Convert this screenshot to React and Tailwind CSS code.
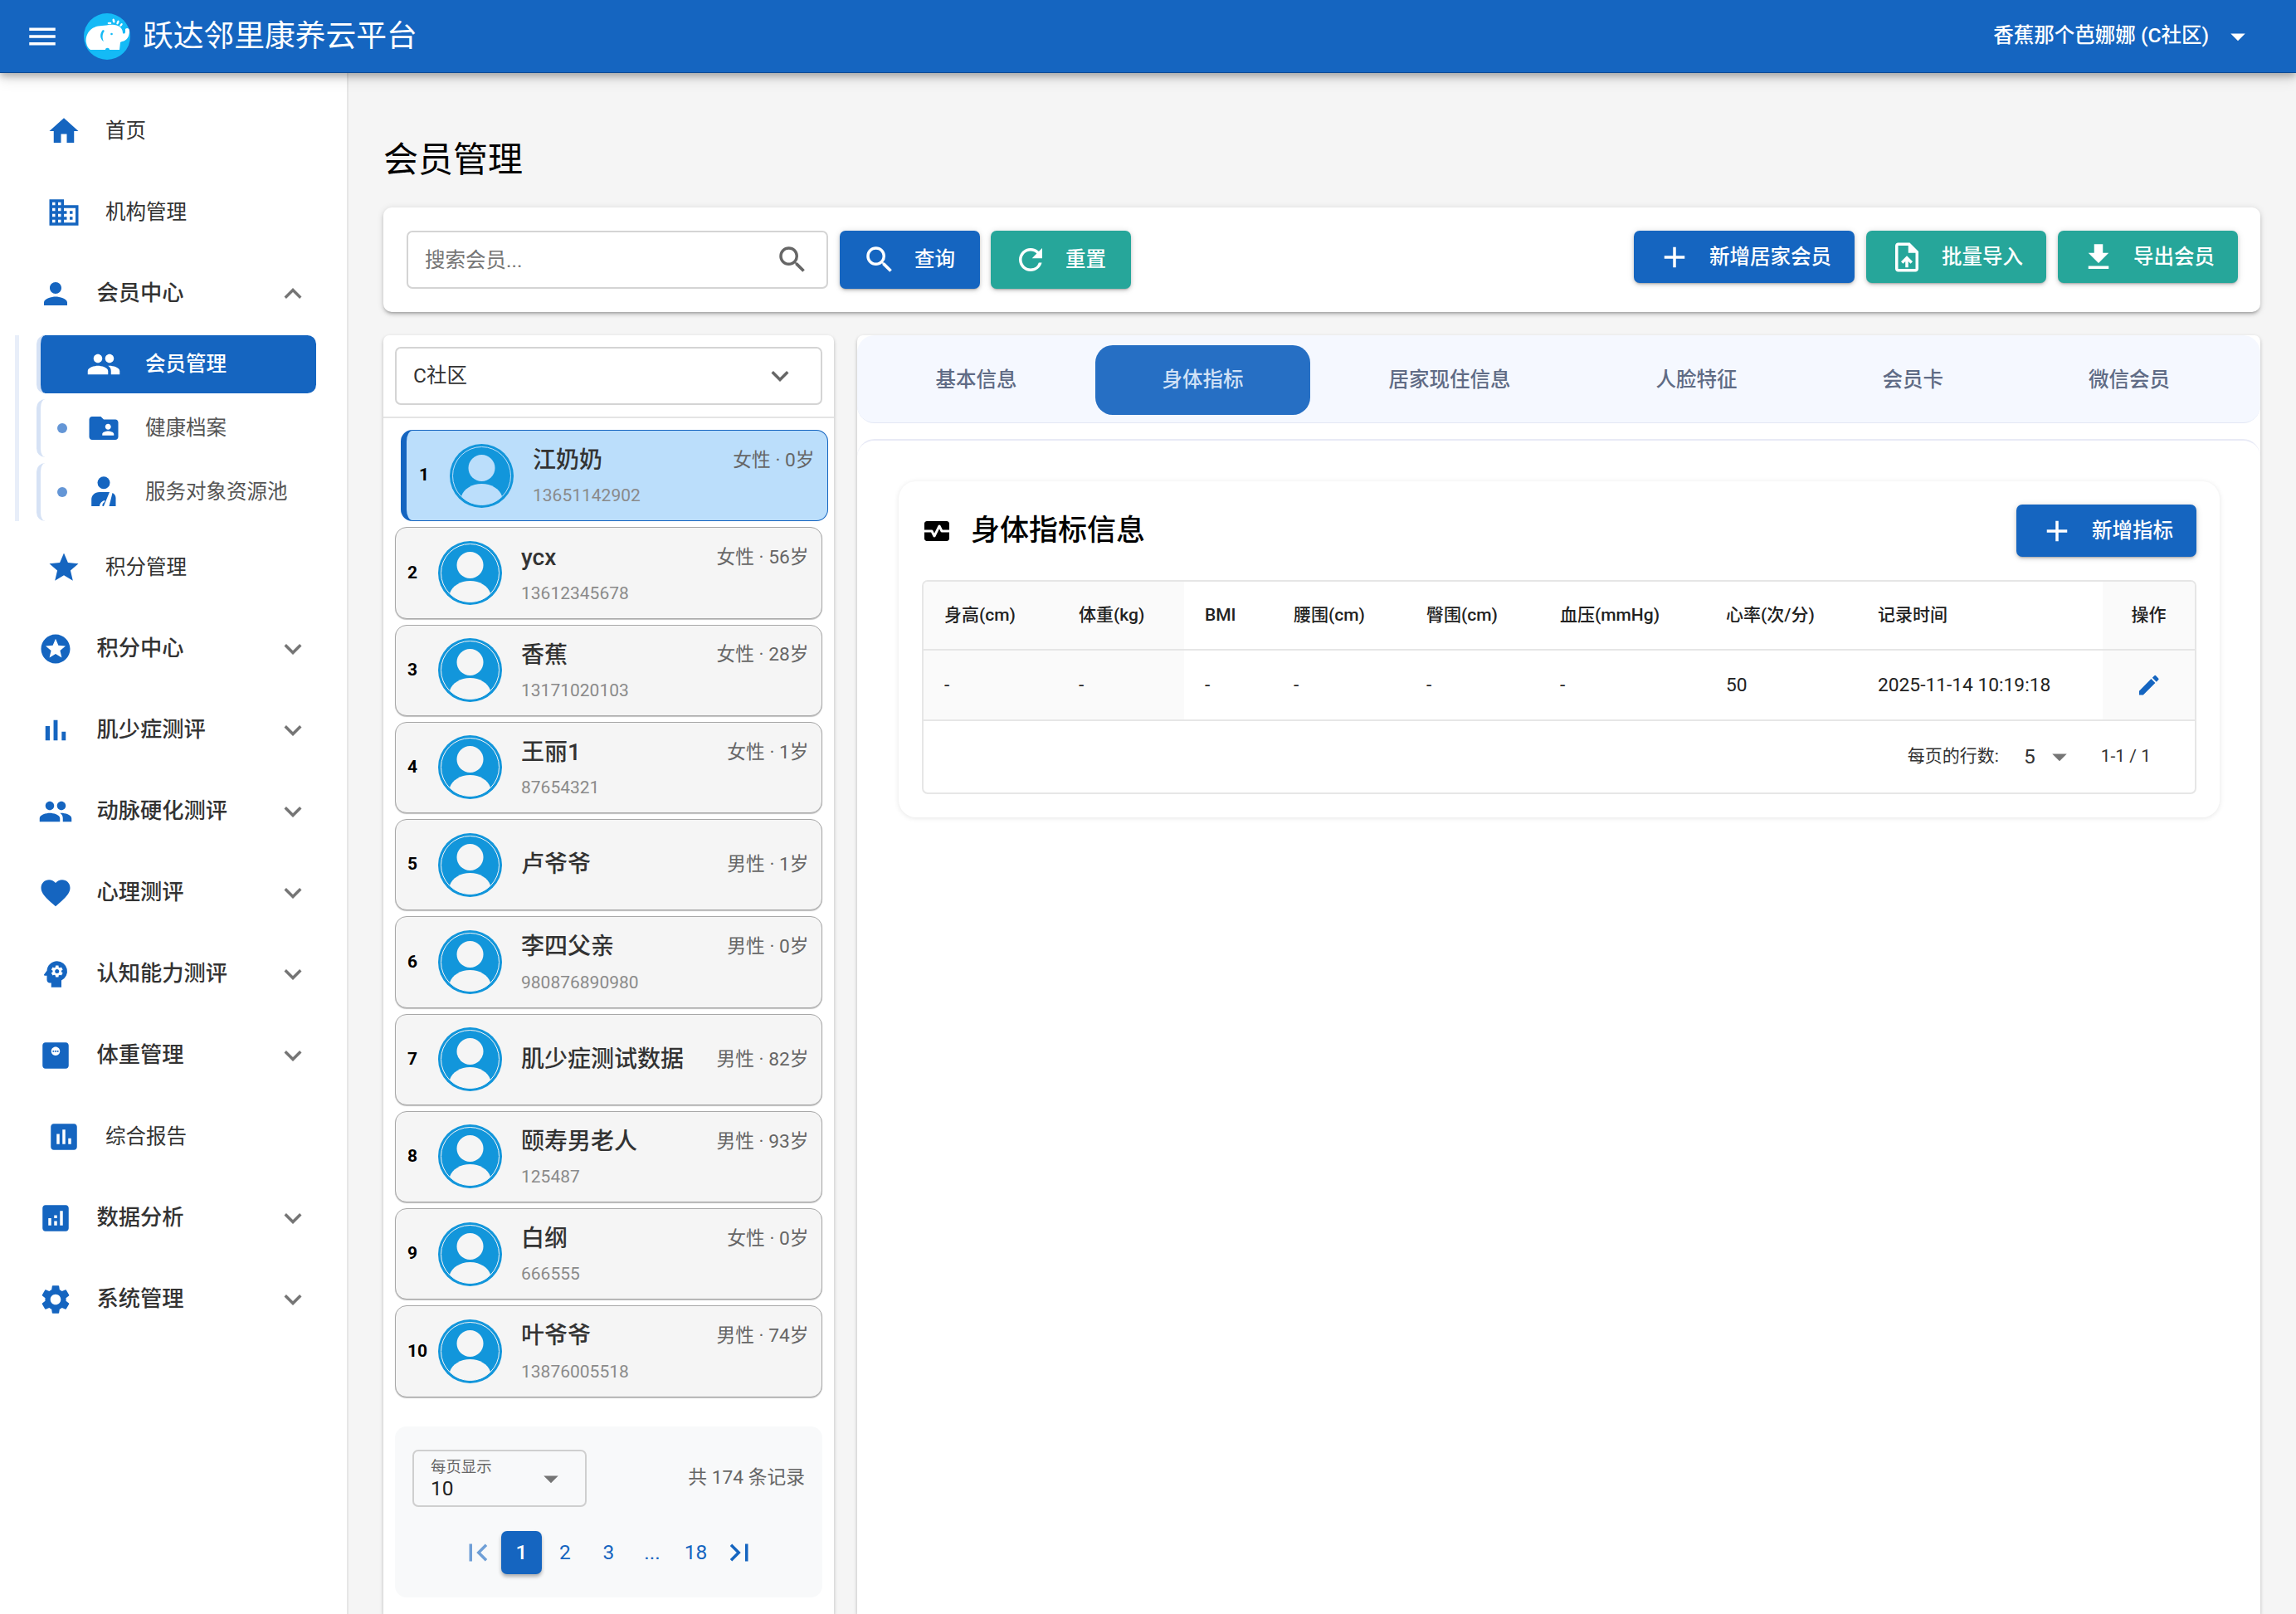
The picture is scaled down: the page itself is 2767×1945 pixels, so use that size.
import React from 'react'
import {
  MdMenu, MdHome, MdBusiness, MdPerson, MdPeople, MdFolderShared, MdStar, MdStars,
  MdFavorite, MdPsychology, MdMonitorWeight, MdAssessment, MdAnalytics, MdSettings,
  MdExpandMore, MdExpandLess, MdSearch, MdRefresh, MdAdd, MdUploadFile, MdFileDownload, MdEdit,
  MdMonitorHeart, MdFirstPage, MdLastPage, MdArrowDropDown,
} from 'react-icons/md'

const members = [
  { name: '江奶奶', info: '女性 · 0岁', phone: '13651142902' },
  { name: 'ycx', info: '女性 · 56岁', phone: '13612345678' },
  { name: '香蕉', info: '女性 · 28岁', phone: '13171020103' },
  { name: '王丽1', info: '女性 · 1岁', phone: '87654321' },
  { name: '卢爷爷', info: '男性 · 1岁', phone: '' },
  { name: '李四父亲', info: '男性 · 0岁', phone: '980876890980' },
  { name: '肌少症测试数据', info: '男性 · 82岁', phone: '' },
  { name: '颐寿男老人', info: '男性 · 93岁', phone: '125487' },
  { name: '白纲', info: '女性 · 0岁', phone: '666555' },
  { name: '叶爷爷', info: '男性 · 74岁', phone: '13876005518' },
]

const columns = [
  { label: '身高(cm)', value: '-', width: 'w-[162px]', tint: true },
  { label: '体重(kg)', value: '-', width: 'w-[152px]', tint: true },
  { label: 'BMI', value: '-', width: 'w-[107px]' },
  { label: '腰围(cm)', value: '-', width: 'w-[160px]' },
  { label: '臀围(cm)', value: '-', width: 'w-[161px]' },
  { label: '血压(mmHg)', value: '-', width: 'w-[200px]' },
  { label: '心率(次/分)', value: '50', width: 'w-[183px]' },
  { label: '记录时间', value: '2025-11-14 10:19:18', width: 'w-[296px]' },
]

const tabs = ['基本信息', '身体指标', '居家现住信息', '人脸特征', '会员卡', '微信会员']

function Logo() {
  return (
    <svg viewBox="0 0 56 56" className="w-[56px] h-[56px] shrink-0">
      <circle cx="28" cy="28" r="28" fill="#14baf6" />
      <path
        d="M3 36C1 26 8 15 22 15C27 15 30 13 37 14C44 15 47 19 47 24C48 25 50 25 50 22L50 19C52 17 55 18 55 21C55 28 52 33 46 34L44 35L43 44L31 44C31 41 26 41 26 44L8 44C5 42 4 40 3 36Z"
        fill="#fff"
      />
      <path d="M23 20C19 24 19 31 24 34C22 30 22 25 25 21Z" fill="#14baf6" />
      <circle cx="33.5" cy="25" r="1.3" fill="#14baf6" />
      <g fill="#fff">
        <ellipse cx="36" cy="9" rx="1.4" ry="2.6" transform="rotate(-15 36 9)" />
        <ellipse cx="41" cy="11" rx="1.3" ry="2.6" transform="rotate(25 41 11)" />
        <ellipse cx="31" cy="12" rx="2.4" ry="1.2" />
        <ellipse cx="45" cy="14" rx="1.2" ry="2.2" transform="rotate(40 45 14)" />
      </g>
    </svg>
  )
}

function Avatar({ bg }) {
  return (
    <svg viewBox="0 0 77 77" className="w-[77px] h-[77px] shrink-0">
      <circle cx="38.5" cy="38.5" r="38.5" fill="#1296db" />
      <circle cx="38.5" cy="38.5" r="35" fill="none" stroke={bg} strokeWidth="1" />
      <circle cx="38.5" cy="29" r="16" fill={bg} />
      <path d="M14 63C17 54 27 48 38.5 48C50 48 60 54 63 63C57 70 48 73.5 38.5 73.5C29 73.5 20 70 14 63Z" fill={bg} />
    </svg>
  )
}

// bars are narrower than the current MdBarChart
function BarsIcon({ className }) {
  return (
    <svg viewBox="0 0 24 24" fill="currentColor" className={className}>
      <path d="M5 9.2h3V19H5zM10.6 5h2.8v14h-2.8zm5.6 8H19v6h-2.8z" />
    </svg>
  )
}

function CarerIcon({ className }) {
  return (
    <svg viewBox="0 0 42 42" fill="currentColor" className={className}>
      <circle cx="21" cy="9.7" r="7.5" />
      <path d="M6.2 38V30C6.2 25 10 21 16 21H28L21 38H19.5C19 36 20 34 22 33L22.5 31C19 31.5 16.5 34 16 38Z" />
      <path d="M31.5 22C34 23 35.5 25.5 35.5 28V38H27.5Z" />
    </svg>
  )
}

function NavItem({ icon: Icon, label, indent, open, more }) {
  return (
    <div className={`h-[98px] flex items-center ${indent ? 'pl-[46px]' : 'pl-[56px]'} pr-[44px]`}>
      <Icon className="w-[42px] h-[42px] text-[#1565c0] shrink-0" />
      <span className={`flex-1 text-[#333] ${more ? 'ml-[28.5px] text-[26.25px] font-medium' : 'ml-[29px] text-[24.5px]'}`}>{label}</span>
      {more && (open
        ? <MdExpandLess className="w-[42px] h-[42px] text-[#757575]" />
        : <MdExpandMore className="w-[42px] h-[42px] text-[#757575]" />)}
    </div>
  )
}

function SubItem({ icon: Icon, label, active }) {
  return (
    <div className={`h-[70px] w-[337px] rounded-[10.5px] border-l-[5px] border-[#d6e2f5] pl-[20px] flex items-center ${active ? 'bg-[#1565c0]' : ''}`}>
      <span className={`w-[12px] h-[12px] rounded-full shrink-0 ${active ? '' : 'bg-[#6496d6]'}`} />
      <Icon className={`ml-[23px] w-[42px] h-[42px] shrink-0 ${active ? 'text-white' : 'text-[#1565c0]'}`} />
      <span className={`ml-[29px] text-[24.5px] ${active ? 'text-white font-medium' : 'text-[#555]'}`}>{label}</span>
    </div>
  )
}

function Sidebar() {
  return (
    <aside className="w-[420px] shrink-0 bg-white border-r-2 border-[#e6e6e6] pt-[21px]">
      <NavItem icon={MdHome} label="首页" />
      <NavItem icon={MdBusiness} label="机构管理" />
      <NavItem icon={MdPerson} label="会员中心" indent more open />
      <div className="ml-[18px] mt-[1px] mb-[7px] pl-[21px] border-l-[5px] border-[#e8eef9] flex flex-col gap-[7px]">
        <SubItem icon={MdPeople} label="会员管理" active />
        <SubItem icon={MdFolderShared} label="健康档案" />
        <SubItem icon={CarerIcon} label="服务对象资源池" />
      </div>
      <NavItem icon={MdStar} label="积分管理" />
      <NavItem icon={MdStars} label="积分中心" indent more />
      <NavItem icon={BarsIcon} label="肌少症测评" indent more />
      <NavItem icon={MdPeople} label="动脉硬化测评" indent more />
      <NavItem icon={MdFavorite} label="心理测评" indent more />
      <NavItem icon={MdPsychology} label="认知能力测评" indent more />
      <NavItem icon={MdMonitorWeight} label="体重管理" indent more />
      <NavItem icon={MdAssessment} label="综合报告" />
      <NavItem icon={MdAnalytics} label="数据分析" indent more />
      <NavItem icon={MdSettings} label="系统管理" indent more />
    </aside>
  )
}

function ActionButton({ icon: Icon, label, teal, tall }) {
  return (
    <button className={`${tall ? 'h-[70px] w-[169px] pl-[27px]' : 'h-[63px] pl-[28px] pt-[1px]'} pr-[28px] flex items-center gap-[21px] rounded-[7px] text-white text-[24.5px] font-medium shadow-[0_3px_2px_-2px_rgba(0,0,0,0.2),0_2px_4px_0_rgba(0,0,0,0.14),0_1px_8px_0_rgba(0,0,0,0.12)] ${teal ? 'bg-[#26a69a]' : 'bg-[#1565c0]'}`}>
      <Icon className="w-[42px] h-[42px] shrink-0" />
      {label}
    </button>
  )
}

function Toolbar() {
  return (
    <div className="h-[126px] bg-white rounded-[10px] pl-[28px] pr-[27px] py-[28px] flex items-start shadow-[0_3px_3px_-2px_rgba(0,0,0,0.2),0_3px_4px_0_rgba(0,0,0,0.14),0_1px_8px_0_rgba(0,0,0,0.12)]">
      <div className="w-[508px] h-[70px] border-2 border-[#d4d4d4] rounded-[7px] pl-[20px] pr-[20px] flex items-center">
        <input
          placeholder="搜索会员..."
          className="flex-1 min-w-0 pt-[2px] outline-none text-[24.5px] placeholder:text-[#757575]"
        />
        <MdSearch className="w-[42px] h-[42px] text-[#666]" />
      </div>
      <div className="ml-[14px] flex gap-[13px]">
        <ActionButton icon={MdSearch} label="查询" tall />
        <ActionButton icon={MdRefresh} label="重置" teal tall />
      </div>
      <div className="ml-auto flex gap-[14px]">
        <ActionButton icon={MdAdd} label="新增居家会员" />
        <ActionButton icon={MdUploadFile} label="批量导入" teal />
        <ActionButton icon={MdFileDownload} label="导出会员" teal />
      </div>
    </div>
  )
}

function MemberRow({ index, member, active }) {
  return (
    <div className={`h-[110.25px] w-[514.5px] shrink-0 rounded-[14px] flex items-center pr-[15px] ${active ? 'ml-[7px] border border-l-[7px] border-[#1565c0] bg-[#bbdefb] pl-[15px]' : 'border border-[#a8a8a8] bg-[#f5f5f5] pl-[14px] shadow-[0_1px_1px_rgba(0,0,0,0.25)]'}`}>
      <span className="w-[37px] shrink-0 text-[21px] font-bold text-black">{index}</span>
      <Avatar bg={active ? '#bbdefb' : '#f5f5f5'} />
      {member.phone ? (
        <div className="ml-[23px] flex-1 self-stretch pt-[16px]">
          <div className="h-[40px] flex items-center justify-between">
            <span className="text-[28px] font-medium text-[#333]">{member.name}</span>
            <span className="text-[22.75px] text-[#666]">{member.info}</span>
          </div>
          <div className="mt-[8px] h-[30px] flex items-center text-[21px] text-[#8a8a8a]">{member.phone}</div>
        </div>
      ) : (
        <div className="ml-[23px] flex-1 flex items-center justify-between">
          <span className="text-[28px] font-medium text-[#333]">{member.name}</span>
          <span className="text-[22.75px] text-[#666]">{member.info}</span>
        </div>
      )}
    </div>
  )
}

function PageButton({ children, active }) {
  return (
    <button className={`w-[49px] h-[52px] mx-[1.75px] rounded-[7px] flex items-center justify-center text-[24.5px] ${active ? 'bg-[#1565c0] text-white font-medium shadow-[0_3px_4px_rgba(0,0,0,0.3)]' : 'text-[#1565c0]'}`}>
      {children}
    </button>
  )
}

function MemberList() {
  return (
    <section className="w-[543px] shrink-0 bg-white rounded-t-[7px] shadow-[0_2px_4px_rgba(0,0,0,0.25)]">
      <div className="p-[14px] border-b-2 border-[#e4e4e4]">
        <div className="h-[70px] border-2 border-[#d4d4d4] rounded-[7px] pl-[20px] pr-[28px] flex items-center justify-between">
          <span className="text-[24.5px] text-[#333]">C社区</span>
          <MdExpandMore className="w-[42px] h-[42px] text-[#666]" />
        </div>
      </div>
      <div className="pt-[14px] px-[14px]">
        <div className="flex flex-col gap-[7px]">
          {members.map((m, i) => (
            <MemberRow key={m.name} index={i + 1} member={m} active={i === 0} />
          ))}
        </div>
        <div className="mt-[35.5px] h-[206px] bg-[#f8f9fa] rounded-[14px] px-[21px] pt-[28px]">
          <div className="flex items-center justify-between">
            <div className="w-[210px] h-[69px] border-2 border-[#cfcfcf] rounded-[7px] pl-[20px] pr-[20px] flex items-center justify-between">
              <div className="flex flex-col">
                <span className="text-[18.4px] leading-[24px] text-[#666]">每页显示</span>
                <span className="text-[24.5px] leading-[28px] text-[#222]">10</span>
              </div>
              <MdArrowDropDown className="w-[42px] h-[42px] text-[#757575]" />
            </div>
            <span className="text-[22.75px] text-[#666]">共 174 条记录</span>
          </div>
          <div className="mt-[29px] flex justify-center">
            <PageButton><MdFirstPage className="w-[42px] h-[42px] opacity-60" /></PageButton>
            <PageButton active>1</PageButton>
            <PageButton>2</PageButton>
            <PageButton>3</PageButton>
            <PageButton>...</PageButton>
            <PageButton>18</PageButton>
            <PageButton><MdLastPage className="w-[42px] h-[42px]" /></PageButton>
          </div>
        </div>
      </div>
    </section>
  )
}

function MetricsTable() {
  return (
    <div className="border-2 border-[#e6e6e6] rounded-[7px] overflow-hidden">
      <table className="w-full table-fixed border-collapse text-left">
        <thead>
          <tr className="h-[82px] border-b-2 border-[#e6e6e6]">
            {columns.map((c) => (
              <th key={c.label} className={`${c.width} pl-[25px] text-[21px] font-medium text-[#222] ${c.tint ? 'bg-[#fafafa]' : ''}`}>{c.label}</th>
            ))}
            <th className="text-center text-[21px] font-medium text-[#222] bg-[#fafafa]">操作</th>
          </tr>
        </thead>
        <tbody>
          <tr className="h-[85px] border-b-2 border-[#e6e6e6]">
            {columns.map((c) => (
              <td key={c.label} className={`pl-[25px] pt-[1px] text-[22.75px] text-[#222] ${c.tint ? 'bg-[#fafafa]' : ''}`}>{c.value}</td>
            ))}
            <td className="bg-[#fafafa]">
              <MdEdit className="mx-auto w-[31.5px] h-[31.5px] text-[#1565c0]" />
            </td>
          </tr>
        </tbody>
      </table>
      <div className="h-[86px] pr-[53px] flex items-center justify-end text-[21px] text-[#333]">
        <span>每页的行数:</span>
        <span className="ml-[30px] text-[24.5px]">5</span>
        <MdArrowDropDown className="ml-[8px] w-[42px] h-[42px] text-[#757575]" />
        <span className="ml-[29px]">1-1 / 1</span>
      </div>
    </div>
  )
}

function DetailPanel() {
  return (
    <section className="flex-1 min-w-0 bg-white rounded-t-[7px] shadow-[0_2px_4px_rgba(0,0,0,0.25)]">
      <div className="h-[106px] bg-[#f5f8ff] border-b border-[#e3e8f5] rounded-[21px] pl-[14px] pt-[11.5px] flex gap-[14px]">
        {tabs.map((t) => (
          <div
            key={t}
            className={`h-[84px] pt-[2px] px-[80.5px] rounded-[21px] flex items-center text-[24.5px] font-medium ${t === '身体指标' ? 'bg-[#266fc4] text-[#d0e1f6]' : 'text-[#5f6b85]'}`}
          >
            {t}
          </div>
        ))}
      </div>
      <div className="mt-[19px] border-t-2 border-[#e8eaf6] rounded-t-[21px] pl-[50px] pr-[49px] pt-[49px]">
        <div className="bg-white rounded-[21px] p-[28px] shadow-[0_1px_6px_rgba(0,0,0,0.1)]">
          <div className="h-[63px] mb-[28px] flex items-center justify-between">
            <div className="flex items-center">
              <MdMonitorHeart className="w-[36px] h-[36px] text-black" />
              <h2 className="ml-[23px] pt-[2px] text-[35px] font-medium text-black">身体指标信息</h2>
            </div>
            <ActionButton icon={MdAdd} label="新增指标" />
          </div>
          <MetricsTable />
        </div>
      </div>
    </section>
  )
}

export default function App() {
  return (
    <div className="h-screen overflow-hidden flex flex-col bg-[#f5f5f5] font-[Roboto,'Noto_Sans_CJK_SC',sans-serif]">
      <header className="relative z-10 h-[88px] shrink-0 bg-[#1565c0] border-b border-[#0d4a94] pl-[30px] pr-[49px] flex items-center text-white shadow-[0_4px_8px_rgba(0,0,0,0.25),0_8px_16px_rgba(0,0,0,0.1)]">
        <MdMenu className="w-[42px] h-[42px]" />
        <div className="ml-[29px]"><Logo /></div>
        <span className="ml-[15px] text-[36.75px]">跃达邻里康养云平台</span>
        <span className="ml-auto text-[24.5px] font-medium">香蕉那个芭娜娜 (C社区)</span>
        <MdArrowDropDown className="ml-[14px] w-[42px] h-[42px]" />
      </header>
      <div className="flex-1 min-h-0 flex">
        <Sidebar />
        <main className="flex-1 min-w-0 pl-[42px] pr-[43px] pt-[72px] flex flex-col">
          <h1 className="h-[64px] mb-[26px] flex items-center text-[42px] font-normal text-black">会员管理</h1>
          <Toolbar />
          <div className="mt-[28px] flex-1 flex gap-[28px]">
            <MemberList />
            <DetailPanel />
          </div>
        </main>
      </div>
    </div>
  )
}
